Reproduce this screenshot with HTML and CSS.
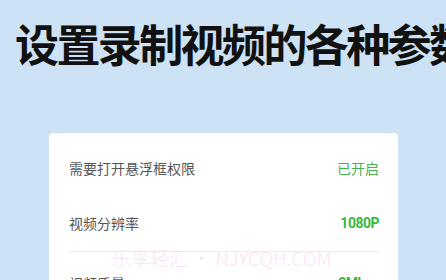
FILE: index.html
```html
<!DOCTYPE html>
<html lang="zh">
<head>
<meta charset="utf-8">
<link rel="stylesheet" href="styles.css">
</head>
<body>
<div class="page">
  <h1 class="title">设置录制视频的各种参数</h1>
  <div class="card">
    <div class="row">
      <span class="label">需要打开悬浮框权限</span>
      <span class="value light">已开启</span>
    </div>
    <div class="row second">
      <span class="label">视频分辨率</span>
      <span class="value">1080P</span>
    </div>
    <div class="divider"></div>
    <div class="row third">
      <span class="label">视频质量</span>
      <span class="value">3Mbps</span>
    </div>
  </div>
  <div class="watermark">乐享轻汇 • NJYCQH.COM</div>
</div>
</body>
</html>
```
FILE: styles.css
```css
html, body {
  margin: 0;
  padding: 0;
}
body {
  width: 446px;
  height: 280px;
  overflow: hidden;
  background: #cde3f5;
  font-family: "Noto Sans CJK SC", "Noto Sans", sans-serif;
}
.page {
  position: relative;
  height: 280px;
  overflow: hidden;
}
.title {
  margin: 0;
  padding: 21px 0 0 15px;
  font-size: 44px;
  line-height: 44px;
  letter-spacing: -2.6px;
  font-weight: 700;
  color: #111;
  white-space: nowrap;
}
.card {
  margin: 68px 0 0 49px;
  width: 349px;
  height: 200px;
  background: #fff;
  border-radius: 4px;
  padding-top: 15px;
  box-sizing: border-box;
}
.row {
  height: 40px;
  display: flex;
  align-items: center;
  justify-content: space-between;
  padding: 0 19px 0 20px;
}
.row.second {
  margin-top: 15px;
}
.row.third {
  margin-top: 11px;
}
.label {
  font-size: 14px;
  color: #555;
}
.value {
  font-family: Roboto, "Noto Sans CJK SC", sans-serif;
  font-size: 14px;
  font-weight: 700;
  letter-spacing: -0.5px;
  color: #38b83c;
}
.value.light {
  font-family: "Noto Sans CJK SC", sans-serif;
  font-weight: 400;
  letter-spacing: 0;
  color: #4caf50;
}
.divider {
  margin: 8px 19px 0 20px;
  height: 1px;
  background: #eeeef2;
}
.watermark {
  position: absolute;
  left: 112px;
  top: 246px;
  font-size: 19px;
  line-height: 24px;
  font-weight: 300;
  color: rgba(248, 196, 238, 0.5);
  white-space: nowrap;
}
```
